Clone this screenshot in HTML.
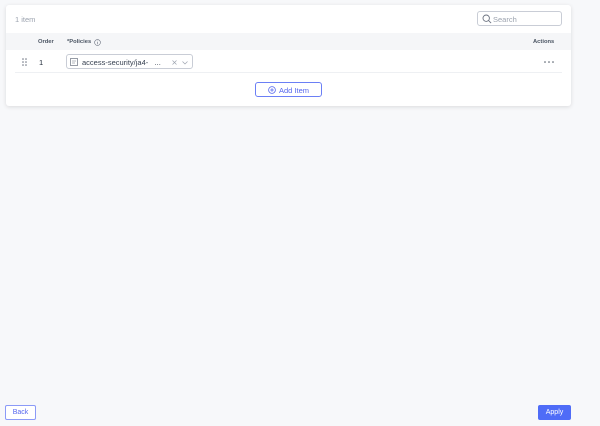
<!DOCTYPE html>
<html><head><style>
*{box-sizing:border-box;margin:0;padding:0}
body{width:600px;height:426px;background:#f7f8fa;font-family:"Liberation Sans",sans-serif;position:relative;overflow:hidden;color:#1f2937}
.card{position:absolute;left:6px;top:5px;width:565px;height:101px;background:#fff;border-radius:3px;box-shadow:0 1px 4px rgba(0,0,0,.12)}
.abs{position:absolute}
</style></head><body>
<div class="card">
 <div class="abs" style="left:9px;top:10px;font-size:7.5px;color:#9ca3af">1 item</div>
 <div class="abs" style="left:471px;top:6px;width:85px;height:15px;border:1px solid #c9cdd6;border-radius:3px">
  <svg class="abs" style="left:4px;top:2px" width="10" height="10" viewBox="0 0 10 10"><circle cx="4.2" cy="4.2" r="3.2" fill="none" stroke="#6b7280" stroke-width=".9"/><path d="M6.6 6.6l2.5 2.5" stroke="#6b7280" stroke-width=".9"/></svg>
  <span class="abs" style="left:15px;top:3px;font-size:7.5px;color:#9ca3af">Search</span>
 </div>
 <div class="abs" style="left:0;top:28px;width:565px;height:17px;background:#f5f6f8"></div>
 <div class="abs" style="left:32px;top:34px;font-size:5.8px;font-weight:bold;color:#4b5563">Order</div>
 <div class="abs" style="left:61px;top:34px;font-size:5.8px;font-weight:bold;color:#4b5563">*Policies</div>
 <svg class="abs" style="left:88px;top:33.5px" width="7" height="7" viewBox="0 0 7 7"><circle cx="3.5" cy="3.5" r="2.9" fill="none" stroke="#6b7280" stroke-width=".6"/><path d="M3.5 3v2.2" stroke="#6b7280" stroke-width=".6"/><circle cx="3.5" cy="2" r=".35" fill="#6b7280"/></svg>
 <div class="abs" style="left:527px;top:34px;font-size:5.8px;font-weight:bold;color:#4b5563">Actions</div>
 <svg class="abs" style="left:16px;top:53px" width="6" height="8"><g fill="#6b7280"><circle cx="1" cy="1" r=".8"/><circle cx="4" cy="1" r=".8"/><circle cx="1" cy="4" r=".8"/><circle cx="4" cy="4" r=".8"/><circle cx="1" cy="7" r=".8"/><circle cx="4" cy="7" r=".8"/></g></svg>
 <div class="abs" style="left:33px;top:53px;font-size:7.5px;color:#1f2937">1</div>
 <div class="abs" style="left:60px;top:49px;width:127px;height:15px;border:1px solid #c9cdd6;border-radius:3px">
  <svg class="abs" style="left:3px;top:3px" width="8" height="8"><rect x=".5" y=".5" width="7" height="7" fill="none" stroke="#6b7280" stroke-width=".7"/><path d="M2 3h4M2 5h3" stroke="#6b7280" stroke-width=".6"/></svg>
  <span class="abs" style="left:15px;top:3px;font-size:7.5px;color:#374151">access-security/ja4- &nbsp; ...</span>
  <svg class="abs" style="left:105px;top:5px" width="5" height="5"><path d="M.5 .5l4 4M4.5 .5l-4 4" stroke="#9ca3af" stroke-width=".7"/></svg>
  <svg class="abs" style="left:115px;top:5.5px" width="6" height="4"><path d="M.5 .5l2.5 2.5 2.5-2.5" fill="none" stroke="#9ca3af" stroke-width=".7"/></svg>
 </div>
 <svg class="abs" style="left:538px;top:56px" width="10" height="2"><g fill="#4b5563"><circle cx="1" cy="1" r=".8"/><circle cx="5" cy="1" r=".8"/><circle cx="9" cy="1" r=".8"/></g></svg>
 <div class="abs" style="left:9px;top:67px;width:547px;height:1px;background:#eef0f3"></div>
 <div class="abs" style="left:249px;top:77px;width:67px;height:15px;border:1px solid #6b7ff5;border-radius:3px"></div>
 <svg class="abs" style="left:262px;top:81px" width="8" height="8" viewBox="0 0 8 8"><circle cx="4" cy="4" r="3.4" fill="none" stroke="#5566ee" stroke-width=".8"/><path d="M4 2.2v3.6M2.2 4h3.6" stroke="#5566ee" stroke-width=".8"/></svg>
 <div class="abs" style="left:273px;top:80.5px;font-size:7.5px;color:#5566ee">Add Item</div>
</div>
<div class="abs" style="left:5px;top:405px;width:31px;height:15px;border:1px solid #8b9af7;border-radius:2px;background:#fff;font-size:7px;color:#5566ee;text-align:center;line-height:13px">Back</div>
<div class="abs" style="left:538px;top:405px;width:33px;height:15px;border-radius:2px;background:#4f6cf7;font-size:7px;color:#fff;text-align:center;line-height:15px">Apply</div>
</body></html>
